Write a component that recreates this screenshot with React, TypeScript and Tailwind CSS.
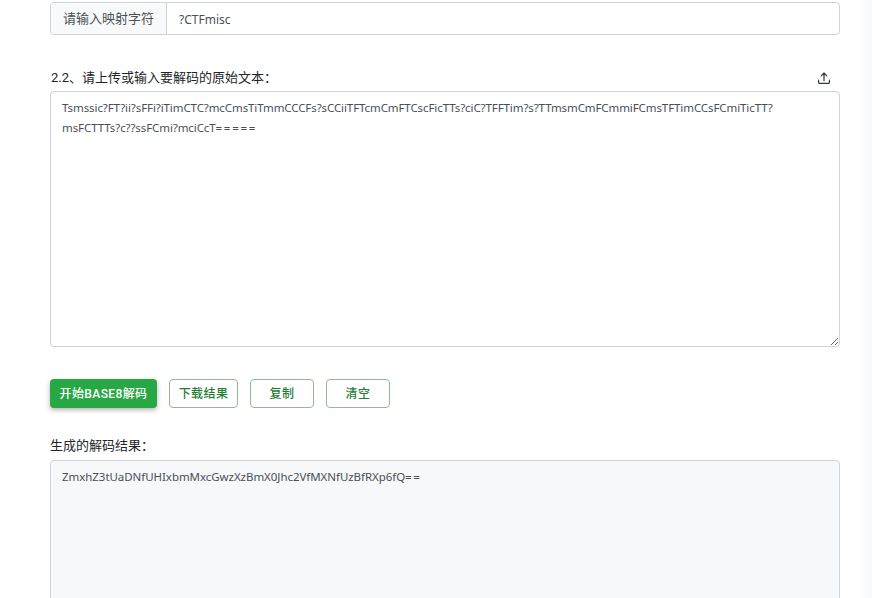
import React from "react";

const FONT = { fontFamily: '"Noto Sans", "Noto Sans CJK SC", sans-serif' };
const CJK = { fontFamily: 'Roboto, "Noto Sans CJK SC", sans-serif' };

function Btn({ label, w }: { label: string; w: string }) {
  return (
    <button style={CJK} className={`h-[29px] ${w} rounded-[4px] border border-[#8fbc97] bg-white text-[12px] font-medium tracking-[0.4px] text-[#1e7e34]`}>
      {label}
    </button>
  );
}

export default function App() {
  return (
    <div style={FONT} className="relative h-[598px] w-[872px] overflow-hidden bg-white text-[#212529]">
      <div className="absolute right-0 top-0 h-full w-[14px] bg-gradient-to-r from-white to-[#f8f9fa]" />
      <div className="relative flex w-[790px] flex-col pt-[2px] ml-[50px]">
        <div className="flex h-[33px] rounded-[4px] border border-[#ced4da]">
          <div style={CJK} className="flex w-[116px] items-center justify-center rounded-l-[4px] border-r border-[#ced4da] bg-[#f8f9fa] pt-[1px] text-[13px] text-[#495057]">
            请输入映射字符
          </div>
          <div className="flex items-center pl-[12px] pt-[2px] text-[12px] text-[#495057]">?CTFmisc</div>
        </div>

        <div className="mt-[32px] flex h-[22px] items-center justify-between pl-[1px] pr-[9px]">
          <span style={CJK} className="-mt-[1px] text-[13px]">2.2、请上传或输入要解码的原始文本：</span>
          <svg width="14" height="14" viewBox="0 0 16 16" fill="none" stroke="#343a40" strokeWidth="1.4" strokeLinecap="round" strokeLinejoin="round">
            <path d="M8 11V2.5M4.8 5.5 8 2.3l3.2 3.2" />
            <path d="M1.8 10.5v2.7c0 .6.4 1 1 1h10.4c.6 0 1-.4 1-1v-2.7" />
          </svg>
        </div>

        <div className="mt-[2px] h-[256px] w-full resize-y overflow-auto whitespace-pre-wrap rounded-[4px] border border-[#ced4da] bg-white px-[11px] py-[6px] text-[11.5px] leading-[20px] tracking-[-0.09px] text-[#495057]">
          {"Tsmssic?FT?ii?sFFi?iTimCTC?mcCmsTiTmmCCCFs?sCCiiTFTcmCmFTCscFicTTs?ciC?TFFTim?s?TTmsmCmFCmmiFCmsTFTimCCsFCmiTicTT?\nmsFCTTTs?c??ssFCmi?mciCcT"}
          <span className="tracking-[1.7px]">=====</span>
        </div>

        <div className="mt-[32px] flex items-center">
          <button style={CJK} className="h-[29px] w-[107px] rounded-[4px] bg-[#28a745] text-[12px] font-medium tracking-[0.4px] text-white shadow-[0_2px_5px_rgba(0,0,0,0.3)]">
            开始BASE8解码
          </button>
          <div className="ml-[12px] flex gap-[12px]">
            <Btn label="下载结果" w="w-[69px]" />
            <Btn label="复制" w="w-[64px]" />
            <Btn label="清空" w="w-[64px]" />
          </div>
        </div>

        <div style={CJK} className="mt-[28px] text-[13px] leading-[20px]">生成的解码结果：</div>
        <div className="mt-[4px] h-[200px] rounded-[4px] border border-[#ced4da] bg-[#f7f8fa] px-[11px] py-[6px] text-[11.5px] leading-[20px] tracking-[-0.05px] text-[#495057]">
          ZmxhZ3tUaDNfUHIxbmMxcGwzXzBmX0Jhc2VfMXNfUzBfRXp6fQ<span className="tracking-[1.5px]">==</span>
        </div>
      </div>
    </div>
  );
}
